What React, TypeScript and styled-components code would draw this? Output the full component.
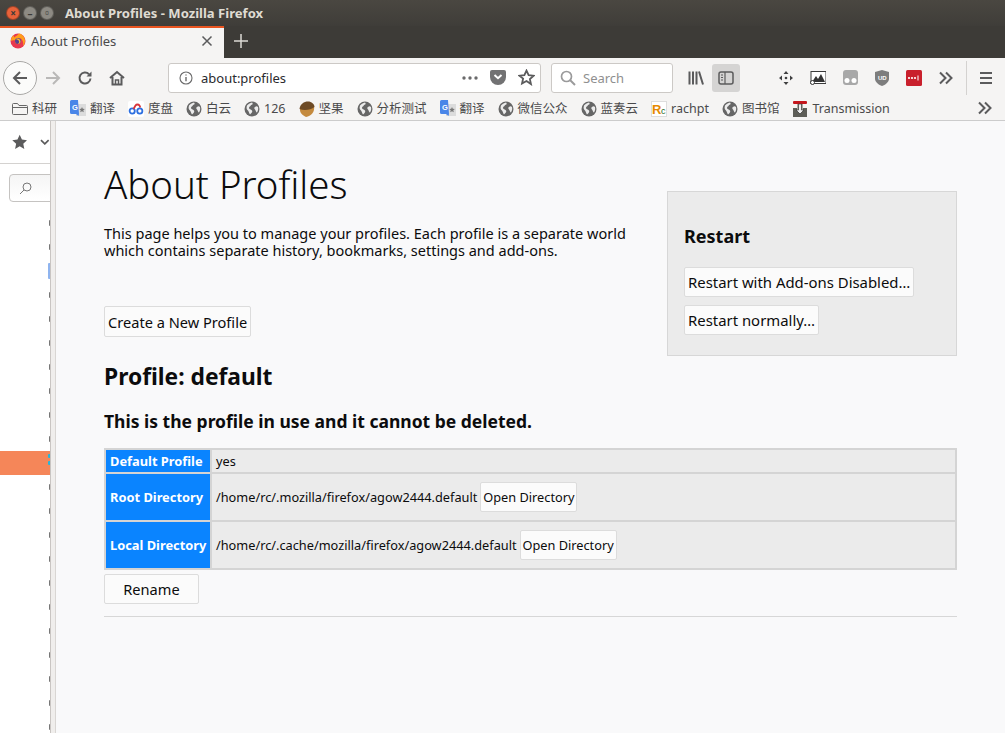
import React from "react";
import styled, { createGlobalStyle } from "styled-components";

const Global = createGlobalStyle`
  html, body { margin: 0; padding: 0; height: 100%; overflow: hidden; }
  body { font-family: "Noto Sans", "Noto Sans CJK SC", sans-serif; background: #f9f9fa; color: #0c0c0d; }
  * { box-sizing: border-box; }
`;

const Window = styled.div`width: 1005px; height: 733px; display: flex; flex-direction: column; overflow: hidden;`;
const TitleBar = styled.div`
  height: 26px; flex: none; display: flex; align-items: center; padding-left: 6px;
  background: linear-gradient(#4a4741, #3f3d39);
`;
const Dots = styled.div`display: flex; gap: 3px; align-items: center; width: 59px;`;
const Dot = styled.span<{ $c: string }>`
  width: 14px; height: 14px; border-radius: 50%; background: ${(p) => p.$c}; border: 1px solid rgba(0,0,0,.3);
  display: flex; align-items: center; justify-content: center; color: #3a3a38; font-size: 10px; line-height: 1; font-weight: 700;
`;
const WinTitle = styled.div`color: #dfdbd2; font-size: 13.1px; font-weight: 700;`;
const TabBar = styled.div`height: 32px; flex: none; display: flex; background: #3d3b37;`;
const Tab = styled.div`
  width: 224px; background: #f5f4f3; border-top: 2px solid #e95420; display: flex; align-items: center; padding: 0 11px 4px 10px;
`;
const TabLabel = styled.span`flex: 1; font-size: 13px; color: #4a4a4b; margin-left: 5px; letter-spacing: -0.05px;`;
const NewTab = styled.div`width: 34px; display: flex; align-items: center; justify-content: center; padding-bottom: 2px;`;
const NavBar = styled.div`height: 37px; flex: none; background: #f5f4f3; display: flex; align-items: center; padding: 2px 0 0 3px; position: relative;`;
const BackBtn = styled.div`
  width: 34px; height: 34px; border-radius: 50%; border: 1px solid #a9a8a6; background: #fbfbfa; display: flex; align-items: center; justify-content: center; flex: none;
`;
const Tool = styled.div<{ $w?: number; $active?: boolean }>`
  width: ${(p) => p.$w ?? 32}px; height: 28px; border-radius: 3px; flex: none; display: flex; align-items: center; justify-content: center;
  background: ${(p) => (p.$active ? "#d5d4d3" : "transparent")};
`;
const UrlBar = styled.div`
  width: 373px; height: 30px; margin-left: 35px; flex: none; background: #fff; border: 1px solid #ccc9c6; border-radius: 3px; display: flex; align-items: center; padding-left: 10px;
`;
const UrlText = styled.span`flex: 1; font-size: 13px; color: #2a2a2e; margin-left: 8px;`;
const SearchBar = styled.div`
  width: 122px; height: 30px; margin-left: 10px; margin-right: 7px; flex: none; background: #fff; border: 1px solid #ccc9c6; border-radius: 3px; display: flex; align-items: center; padding-left: 8px; gap: 7px;
`;
const SearchText = styled.span`font-size: 13px; color: #8f8f90;`;
const Sep = styled.div`width: 1px; height: 34px; background: #d4d2d0; margin: 0 5px 0 4px; flex: none;`;
const BookBar = styled.div`height: 26px; flex: none; background: #f5f4f3; border-bottom: 1px solid #ccc; display: flex; align-items: center; padding: 3px 0 0 12px; gap: 13px; position: relative;`;
const Mark = styled.div`display: flex; align-items: center; gap: 4px; font-size: 12.5px; color: #4a4a4b; white-space: nowrap; line-height: 16px;`;
const MoreMarks = styled.div`position: absolute; left: 977px; top: 5px; display: flex;`;
const Body = styled.div`flex: 1; display: flex; min-height: 0;`;
const Sidebar = styled.aside`width: 50px; flex: none; background: #fff; display: flex; flex-direction: column; overflow: hidden; position: relative;`;
const SideHead = styled.div`height: 43px; flex: none; border-bottom: 1px solid #d4d2d0; display: flex; align-items: center; padding-left: 12px; gap: 13px;`;
const SideSearch = styled.div`
  width: 60px; height: 28px; margin: 10px 0 0 9px; flex: none; border: 1px solid #c5c3c1; border-radius: 4px; background: linear-gradient(#f5f5f5, #fff); display: flex; align-items: center; padding-left: 9px;
`;
const Highlight = styled.div`position: absolute; left: 0; right: 0; top: 330px; height: 24px; background: #f58659;`;
const Tick = styled.i<{ $y: number; $c?: string; $h?: number; $w?: number }>`
  position: absolute; right: 0; top: ${(p) => p.$y}px; width: ${(p) => p.$w ?? 1.5}px; height: ${(p) => p.$h ?? 6}px; border-radius: 1px 0 0 1px; background: ${(p) => p.$c ?? "#777"};
`;
const Splitter = styled.div`width: 6px; flex: none; background: #f0eeec; border-left: 1px solid #c9c5c2; border-right: 1px solid #d9d6d3;`;
const Content = styled.main`flex: 1; background: #f9f9fa; padding: 38px 48px 0 48px; min-width: 0;`;
const Top = styled.div`display: flex; justify-content: space-between; align-items: flex-start;`;
const Left = styled.div`width: 540px;`;
const H1 = styled.h1`margin: 0; font-size: 38.4px; font-weight: 300; line-height: 50px; color: #0c0c0d;`;
const Intro = styled.p`margin: 16px 0 0; font-size: 14.5px; line-height: 17px; color: #0c0c0d;`;
const Btn = styled.button`
  display: block; font: inherit; font-size: 14.6px; height: 31px; padding: 0 3px; color: #0c0c0d; background: #fbfbfb; border: 1px solid #dcdcdc; border-radius: 2px; white-space: nowrap;
`;
const CreateBtn = styled(Btn)`margin-top: 47px;`;
const H2 = styled.h2`margin: 25px 0 0; font-size: 22.8px; line-height: 30px; font-weight: 700; color: #0c0c0d;`;
const Aside = styled.section`
  width: 290px; height: 165px; margin-top: 32px; background: #ebebeb; border: 1px solid #d7d7d7; padding: 0 16px; display: flex; flex-direction: column; align-items: flex-start;
`;
const H3 = styled.h3`margin: 32px 0 19px; font-size: 18px; line-height: 24px; font-weight: 700;`;
const AsideBtn = styled(Btn)`height: 30px; margin-bottom: 8px; font-size: 14.9px;`;
const Sub = styled.h3`margin: 17px 0 15px; font-size: 17.5px; line-height: 24px; font-weight: 700;`;
const Table = styled.table`width: 853px; background: #d4d4d4; padding: 2px; display: block;`;
const Tb = styled.tbody`display: flex; flex-direction: column; gap: 2px;`;
const Tr = styled.tr<{ $h: number }>`display: flex; height: ${(p) => p.$h}px; gap: 2px;`;
const Th = styled.th`
  width: 104px; flex: none; background: #0a84ff; color: #fff; font-size: 12.85px; font-weight: 700; display: flex; align-items: center; padding: 0 0 0 4px; white-space: nowrap;
`;
const Td = styled.td`
  flex: 1; background: #ebebeb; font-size: 12.75px; display: flex; align-items: center; padding: 0 0 0 4px; white-space: nowrap; color: #0c0c0d;
`;
const DirBtn = styled.button`
  font: inherit; font-size: 12.75px; height: 30px; width: 97px; padding: 0; margin-left: 3px; background: #fbfbfb; border: 1px solid #dcdcdc; border-radius: 2px; color: #0c0c0d; white-space: nowrap;
`;
const Rename = styled(Btn)`width: 95px; height: 30px; margin-top: 4px;`;
const Rule = styled.hr`margin: 12px 0 0; border: 0; border-top: 1px solid #d7d7d7;`;

const Gray = "#5b5b5c";
const Globe = () => (
  <svg width="16" height="16" viewBox="0 0 16 16">
    <circle cx="8" cy="8" r="7.5" fill="#666" />
    <path d="M3 4.5c2-2 3-2.5 5-3 1 1 1 2-1 2.5-.5 1.500-2 1.500-2 3s2 1 3 2.500-1 3-2 4c-1-1-1-3-2-4S2 7.500 3 4.500zM11 6c1-1 2-1 3 0 .5 2 0 4-1 5.500-1 0-1-2-2-3s-1-2 0-2.500z" fill="#ececec" />
  </svg>
);
const GTrans = () => (
  <svg width="16" height="18" viewBox="0 0 16 18">
    <rect x="6" y="4" width="10" height="12" fill="#dcdcdc" />
    <path d="M0 1.500A1.500 1.500 0 0 1 1.500 0H8l1 14 -.500 2L6 14H1.500A1.500 1.500 0 0 1 0 12.500z" fill="#4a86e8" />
    <text x="2" y="10" fontSize="7.500" fontWeight="700" fill="#fff" fontFamily="Liberation Sans">G</text>
    <path d="M12 7l.8 1.800 2 .2-1.500 1.300.5 2-1.800-1-1.800 1 .5-2L9.200 9l2-.2z" fill="#777" />
  </svg>
);
const Acorn = () => (
  <svg width="16" height="16" viewBox="0 0 16 16">
    <path d="M1 8c-.5 3.500 2.500 6.500 6 8C12 15 16 11 15 5.500z" fill="#c48a3e" />
    <path d="M.5 8C1 3 5 .5 9 .5c3.500 0 6.500 2.500 6.500 5.500C12 9 5 10 .5 8z" fill="#6d4a25" />
  </svg>
);
const Baidu = () => (
  <svg width="16" height="16" viewBox="0 0 16 16" fill="none">
    <rect width="16" height="16" fill="#fff" rx="2" />
    <circle cx="4.200" cy="10" r="2.600" stroke="#2d6fe0" strokeWidth="1.800" />
    <circle cx="11.800" cy="10" r="2.600" stroke="#2d6fe0" strokeWidth="1.800" />
    <path d="M5.500 8l2-3.500a2.500 2.500 0 0 1 4 0l.800 2" stroke="#d8343a" strokeWidth="1.800" />
  </svg>
);
const Rc = () => (
  <svg width="16" height="16" viewBox="0 0 16 16">
    <rect x=".5" y=".5" width="15" height="15" fill="#fff" stroke="#ddd" />
    <text x="1" y="13" fontSize="13" fontWeight="700" fill="#e68a00" fontFamily="Liberation Sans">R</text>
    <text x="10" y="13" fontSize="9" fill="#1c6b22" fontFamily="Liberation Sans">c</text>
  </svg>
);
const Transmission = () => (
  <svg width="16" height="16" viewBox="0 0 16 16">
    <rect x="1" y="0" width="14" height="3" rx="1" fill="#c4161c" />
    <rect x="1" y="7" width="14" height="9" fill="#5e5e58" />
    <rect x="5" y="3" width="6" height="6" fill="#a9a9a1" />
    <path d="M6.500 3h3v6H12l-4 4-4-4h2.500z" fill="#eee" stroke="#333" strokeWidth=".7" />
  </svg>
);
const Folder = () => (
  <svg width="16" height="16" viewBox="0 0 16 16" fill="#f5f4f3" stroke="#666">
    <path d="M.5 3.500A1 1 0 0 1 1.500 2.500h4l1.500 2h7.500a1 1 0 0 1 1 1v7a1 1 0 0 1-1 1h-13a1 1 0 0 1-1-1z" />
    <path d="M.5 6.500h15" />
  </svg>
);
const Chevrons = ({ c = Gray }: { c?: string }) => (
  <svg width="16" height="16" viewBox="0 0 16 16" fill="none" stroke={c} strokeWidth="2">
    <path d="M2 2.500 7.500 8 2 13.500M8 2.500 13.500 8 8 13.500" />
  </svg>
);
const FirefoxLogo = () => (
  <svg width="16" height="16" viewBox="0 0 16 16">
    <circle cx="8" cy="8" r="7.500" fill="#e8384f" />
    <path d="M1 8a7 7 0 0 1 3-6c-.5 1 0 2 .5 2.500C6 3 8 2 9 .6c3 .6 6 3.400 6 7.400a7 7 0 0 1-2 5c1-4-1-7-3-8 1 2 .5 5-2 5.500S4 9 5.500 7.500C3.500 7 2 8 1 8z" fill="#ff9f1c" />
    <circle cx="8" cy="8" r="3" fill="#3b2fa5" opacity=".85" />
    <path d="M6 6c2-1 4 0 4.500 2s-1.500 3.500-3 3C9 10.500 9.500 9 9 8S7 6.500 6 6z" fill="#ffbd2e" />
  </svg>
);

const marks: [React.ReactNode, string][] = [
  [<Folder />, "科研"], [<GTrans />, "翻译"], [<Baidu />, "度盘"], [<Globe />, "白云"], [<Globe />, "126"], [<Acorn />, "坚果"],
  [<Globe />, "分析测试"], [<GTrans />, "翻译"], [<Globe />, "微信公众"], [<Globe />, "蓝奏云"], [<Rc />, "rachpt"], [<Globe />, "图书馆"], [<Transmission />, "Transmission"],
];

const ticks = Array.from({ length: 22 }, (_, i) => 223 + 24 * i).filter((y) => y !== 271 && y !== 463);

export default function App() {
  return (
    <Window>
      <Global />
      <TitleBar>
        <Dots>
          <Dot $c="#e8623a">×</Dot>
          <Dot $c="#8d8a83">–</Dot>
          <Dot $c="#8d8a83">▫</Dot>
        </Dots>
        <WinTitle>About Profiles - Mozilla Firefox</WinTitle>
      </TitleBar>
      <TabBar>
        <Tab>
          <FirefoxLogo />
          <TabLabel>About Profiles</TabLabel>
          <svg width="12" height="12" viewBox="0 0 12 12" stroke="#5b5b5c" strokeWidth="1.500"><path d="M1.500 1.500l9 9M10.500 1.500l-9 9" /></svg>
        </Tab>
        <NewTab>
          <svg width="14" height="14" viewBox="0 0 14 14" stroke="#dcdad5" strokeWidth="1.500"><path d="M7 0v14M0 7h14" /></svg>
        </NewTab>
      </TabBar>
      <NavBar>
        <BackBtn>
          <svg width="16" height="16" viewBox="0 0 16 16" fill="none" stroke={Gray} strokeWidth="2"><path d="M15 8H2M8 2 2 8l6 6" /></svg>
        </BackBtn>
        <Tool>
          <svg width="16" height="16" viewBox="0 0 16 16" fill="none" stroke="#b9b8b7" strokeWidth="2"><path d="M1 8h13M8 2l6 6-6 6" /></svg>
        </Tool>
        <Tool>
          <svg width="16" height="16" viewBox="0 0 16 16" fill="none" stroke={Gray} strokeWidth="2"><path d="M13.500 8.500A5.500 5.500 0 1 1 12 4.200" /><path d="M14.500 1.500v5h-5z" fill={Gray} stroke="none" /></svg>
        </Tool>
        <Tool>
          <svg width="16" height="16" viewBox="0 0 16 16" fill="none" stroke={Gray} strokeWidth="2"><path d="M1 8l7-6 7 6M3.500 7v7.500h9V7" /><path d="M6.500 14.500V10h3v4.500" strokeWidth="1.500" /></svg>
        </Tool>
        <UrlBar>
          <svg width="14" height="14" viewBox="0 0 14 14" fill="none" stroke="#6a6a6b" strokeWidth="1.100"><circle cx="7" cy="7" r="6" /><path d="M7 6v4.200M7 3.400v1.200" strokeWidth="1.400" /></svg>
          <UrlText>about:profiles</UrlText>
          <svg width="16" height="4" viewBox="0 0 16 4" fill="#6a6a6b" style={{ marginRight: 12 }}><circle cx="2" cy="2" r="1.700" /><circle cx="8" cy="2" r="1.700" /><circle cx="14" cy="2" r="1.700" /></svg>
          <svg width="16" height="15" viewBox="0 0 16 15" style={{ marginRight: 12 }}><path d="M0 2a2 2 0 0 1 2-2h12a2 2 0 0 1 2 2v5a8 8 0 0 1-16 0z" fill="#727273" /><path d="M4.500 5 8 8.200 11.500 5" fill="none" stroke="#fff" strokeWidth="2" /></svg>
          <svg width="17" height="17" viewBox="0 0 16 16" fill="none" stroke={Gray} strokeWidth="1.700" style={{ marginRight: 5 }}><path d="M8 1.500l2 4.300 4.700.5-3.500 3.200 1 4.700L8 11.300l-4.200 2.400 1-4.700L1.300 6.300 6 5.800z" /></svg>
        </UrlBar>
        <SearchBar>
          <svg width="16" height="16" viewBox="0 0 16 16" fill="none" stroke="#9a9a9b" strokeWidth="1.700"><circle cx="6.500" cy="6.500" r="5" /><path d="M10 10l5 5" strokeWidth="2" /></svg>
          <SearchText>Search</SearchText>
        </SearchBar>
        <Tool>
          <svg width="16" height="16" viewBox="0 0 16 16" stroke={Gray} strokeWidth="2" fill="none"><path d="M1.500 1.500v13M5 1.500v13M8.500 1.500v13M11 1.500l4 13" /></svg>
        </Tool>
        <Tool $w={28} $active>
          <svg width="16" height="14" viewBox="0 0 16 14" fill="none" stroke={Gray} strokeWidth="1.500"><rect x="1" y="1" width="14" height="12" rx="2" /><path d="M7 1v12M3 4h2M3 6.500h2M3 9h2" strokeWidth="1.200" /></svg>
        </Tool>
        <Tool style={{ marginLeft: 30 }}>
          <svg width="14" height="14" viewBox="0 0 14 14" fill="#3f3f40"><path d="M7 0l2.500 3h-5zM7 14l2.500-3h-5zM0 7l3-2.500v5zM14 7l-3-2.500v5z" /><circle cx="7" cy="7" r="1.300" /></svg>
        </Tool>
        <Tool>
          <svg width="16" height="14" viewBox="0 0 16 14"><rect x="1" y="0.500" width="15" height="12" fill="#fff" stroke="#3a3a3a" /><path d="M2 11l4-6 2 3 3-5 4 8z" fill="#333" /><circle cx="2.500" cy="11.500" r="2" fill="#fff" stroke="#333" /></svg>
        </Tool>
        <Tool>
          <svg width="15" height="15" viewBox="0 0 15 15"><rect width="15" height="15" rx="3" fill="#a8a8a8" /><circle cx="4" cy="10.500" r="2.500" fill="#fff" /><circle cx="11" cy="10.500" r="2.500" fill="#fff" /></svg>
        </Tool>
        <Tool>
          <svg width="14" height="16" viewBox="0 0 14 16"><path d="M7 0l7 2v7c0 3-4 6-7 7-3-1-7-4-7-7V2z" fill="#7d7d7d" /><text x="3" y="10" fontSize="6" fontWeight="700" fill="#fff" fontFamily="Liberation Sans">UD</text></svg>
        </Tool>
        <Tool>
          <svg width="16" height="16" viewBox="0 0 16 16"><rect width="16" height="16" rx="1.500" fill="#c9202c" /><circle cx="3" cy="8" r="1.100" fill="#fff" /><circle cx="6" cy="8" r="1.100" fill="#fff" /><circle cx="9" cy="8" r="1.100" fill="#fff" /><rect x="11.500" y="5.500" width="1" height="5" fill="#fff" /></svg>
        </Tool>
        <Tool><Chevrons /></Tool>
        <Sep />
        <Tool $w={28}>
          <svg width="14" height="12" viewBox="0 0 14 12" stroke={Gray} strokeWidth="2"><path d="M1 1h12M1 6h12M1 11h12" /></svg>
        </Tool>
      </NavBar>
      <BookBar>
        {marks.map(([icon, label], i) => (
          <Mark key={i}>{icon}<span>{label}</span></Mark>
        ))}
        <MoreMarks><Chevrons /></MoreMarks>
      </BookBar>
      <Body>
        <Sidebar>
          <SideHead>
            <svg width="16" height="16" viewBox="0 0 16 16" fill="#5b5b5c"><path d="M8 .5l2.300 5 5.400.6-4 3.700 1.100 5.400L8 12.500l-4.800 2.700 1.100-5.400-4-3.700 5.400-.6z" /></svg>
            <svg width="10" height="6" viewBox="0 0 10 6" fill="none" stroke="#5b5b5c" strokeWidth="1.700"><path d="M1 1l4 4 4-4" /></svg>
          </SideHead>
          <SideSearch>
            <svg width="13" height="13" viewBox="0 0 13 13" fill="none" stroke="#777" strokeWidth="1"><circle cx="8" cy="5" r="4" /><path d="M5 8l-4 4" /></svg>
          </SideSearch>
          <Highlight />
          {ticks.map((y) => <Tick key={y} $y={y - 3 - 121} />)}
          <Tick $y={142} $h={16} $w={2} $c="#8fb4ef" />
          <Tick $y={333} $c="#28b6d8" $h={4} $w={2} />
          <Tick $y={340} $c="#28b6d8" $h={4} $w={2} />
        </Sidebar>
        <Splitter />
        <Content>
          <Top>
            <Left>
              <H1>About Profiles</H1>
              <Intro>This page helps you to manage your profiles. Each profile is a separate world<br />which contains separate history, bookmarks, settings and add-ons.</Intro>
              <CreateBtn>Create a New Profile</CreateBtn>
              <H2>Profile: default</H2>
            </Left>
            <Aside>
              <H3>Restart</H3>
              <AsideBtn>Restart with Add-ons Disabled…</AsideBtn>
              <AsideBtn>Restart normally…</AsideBtn>
            </Aside>
          </Top>
          <Sub>This is the profile in use and it cannot be deleted.</Sub>
          <Table>
            <Tb>
              <Tr $h={22}><Th>Default Profile</Th><Td>yes</Td></Tr>
              <Tr $h={46}><Th>Root Directory</Th><Td>/home/rc/.mozilla/firefox/agow2444.default<DirBtn>Open Directory</DirBtn></Td></Tr>
              <Tr $h={46}><Th>Local Directory</Th><Td>/home/rc/.cache/mozilla/firefox/agow2444.default<DirBtn>Open Directory</DirBtn></Td></Tr>
            </Tb>
          </Table>
          <Rename>Rename</Rename>
          <Rule />
        </Content>
      </Body>
    </Window>
  );
}
